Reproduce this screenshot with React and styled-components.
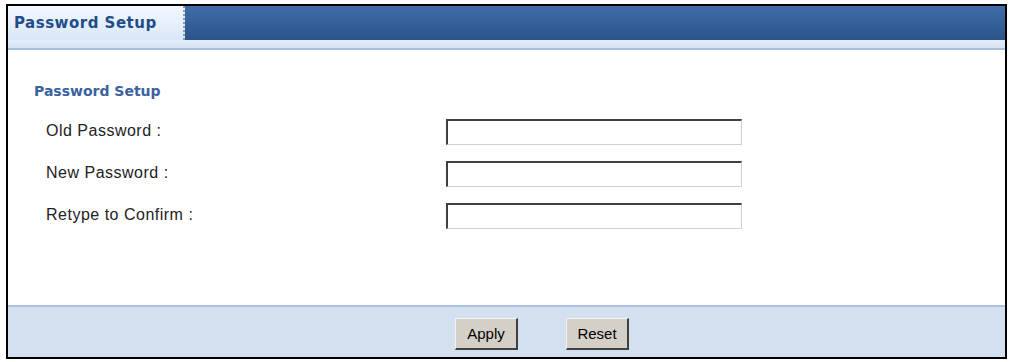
import React from 'react';
import styled, {createGlobalStyle} from 'styled-components';

const GlobalStyle = createGlobalStyle`
  html, body {
    margin: 0;
    padding: 0;
    background: #fff;
  }
  body {
    font-family: "Liberation Sans", Arial, sans-serif;
  }
`;

const Frame = styled.div`
  box-sizing: border-box;
  margin: 4px 0 0 6px;
  width: 1001px;
  height: 355px;
  border: 2px solid #000;
  display: flex;
  flex-direction: column;
  background: #fff;
`;

const TabBar = styled.div`
  display: flex;
  height: 34px;
`;

const Tab = styled.div`
  width: 177px;
  padding-left: 6px;
  box-sizing: border-box;
  display: flex;
  align-items: center;
  background: linear-gradient(to bottom, #f3f8fe 0%, #e4eefa 60%, #dae7f7 100%);
  border-right: 2px dotted #8a9bb3;
  font-family: Tahoma, "DejaVu Sans", sans-serif;
  font-weight: bold;
  font-size: 15px;
  letter-spacing: 0.5px;
  color: #1f4c8a;
  white-space: nowrap;
`;

const TabFiller = styled.div`
  flex: 1;
  background: linear-gradient(to bottom, #3f6ea8 0%, #335f98 55%, #2b5388 100%);
`;

const TabStrip = styled.div`
  height: 8px;
  background: linear-gradient(to bottom, #e2edfb, #d6e4f6);
  border-bottom: 2px solid #a7bedd;
`;

const Body = styled.div`
  flex: 1;
  padding: 32px 0 0 26px;
`;

const SectionTitle = styled.div`
  font-family: Tahoma, "DejaVu Sans", sans-serif;
  font-weight: bold;
  font-size: 14px;
  color: #3a62a0;
  line-height: 18px;
  margin-bottom: 19px;
`;

const Form = styled.div`
  display: grid;
  grid-template-columns: 400px 296px;
  row-gap: 16px;
  padding-left: 12px;
`;

const Label = styled.label`
  font-size: 16px;
  letter-spacing: 0.5px;
  color: #222;
  display: flex;
  align-items: center;
  height: 24px;
  padding-bottom: 2px;
`;

const Input = styled.input`
  box-sizing: border-box;
  width: 296px;
  height: 26px;
  margin: 0;
  padding: 2px 4px;
  background: #fff;
  border-style: solid;
  border-width: 2px 1px 1px 2px;
  border-color: #404040 #d4d0c8 #d4d0c8 #404040;
  outline: none;
  font-size: 13px;
`;

const Footer = styled.div`
  height: 52px;
  border-top: 2px solid #a9c1e2;
  background: #d3e0f0;
  display: flex;
  align-items: flex-start;
  padding: 11px 0 0 447px;
  box-sizing: border-box;
  gap: 48px;
`;

const Button = styled.button`
  height: 32px;
  padding: 0 6px;
  min-width: 63px;
  background: #d4d0c8;
  border-style: solid;
  border-width: 1px 2px 2px 1px;
  border-color: #f4f2ee #404040 #404040 #f4f2ee;
  font-family: "Liberation Sans", Arial, sans-serif;
  font-size: 15px;
  color: #000;
`;

const fields = ['Old Password :', 'New Password :', 'Retype to Confirm :'];

export default function App() {
  return (
    <>
      <GlobalStyle />
      <Frame>
        <TabBar>
          <Tab>Password Setup</Tab>
          <TabFiller />
        </TabBar>
        <TabStrip />
        <Body>
          <SectionTitle>Password Setup</SectionTitle>
          <Form>
            {fields.map(field => (
              <React.Fragment key={field}>
                <Label>{field}</Label>
                <Input type="password" />
              </React.Fragment>
            ))}
          </Form>
        </Body>
        <Footer>
          <Button>Apply</Button>
          <Button>Reset</Button>
        </Footer>
      </Frame>
    </>
  );
}
